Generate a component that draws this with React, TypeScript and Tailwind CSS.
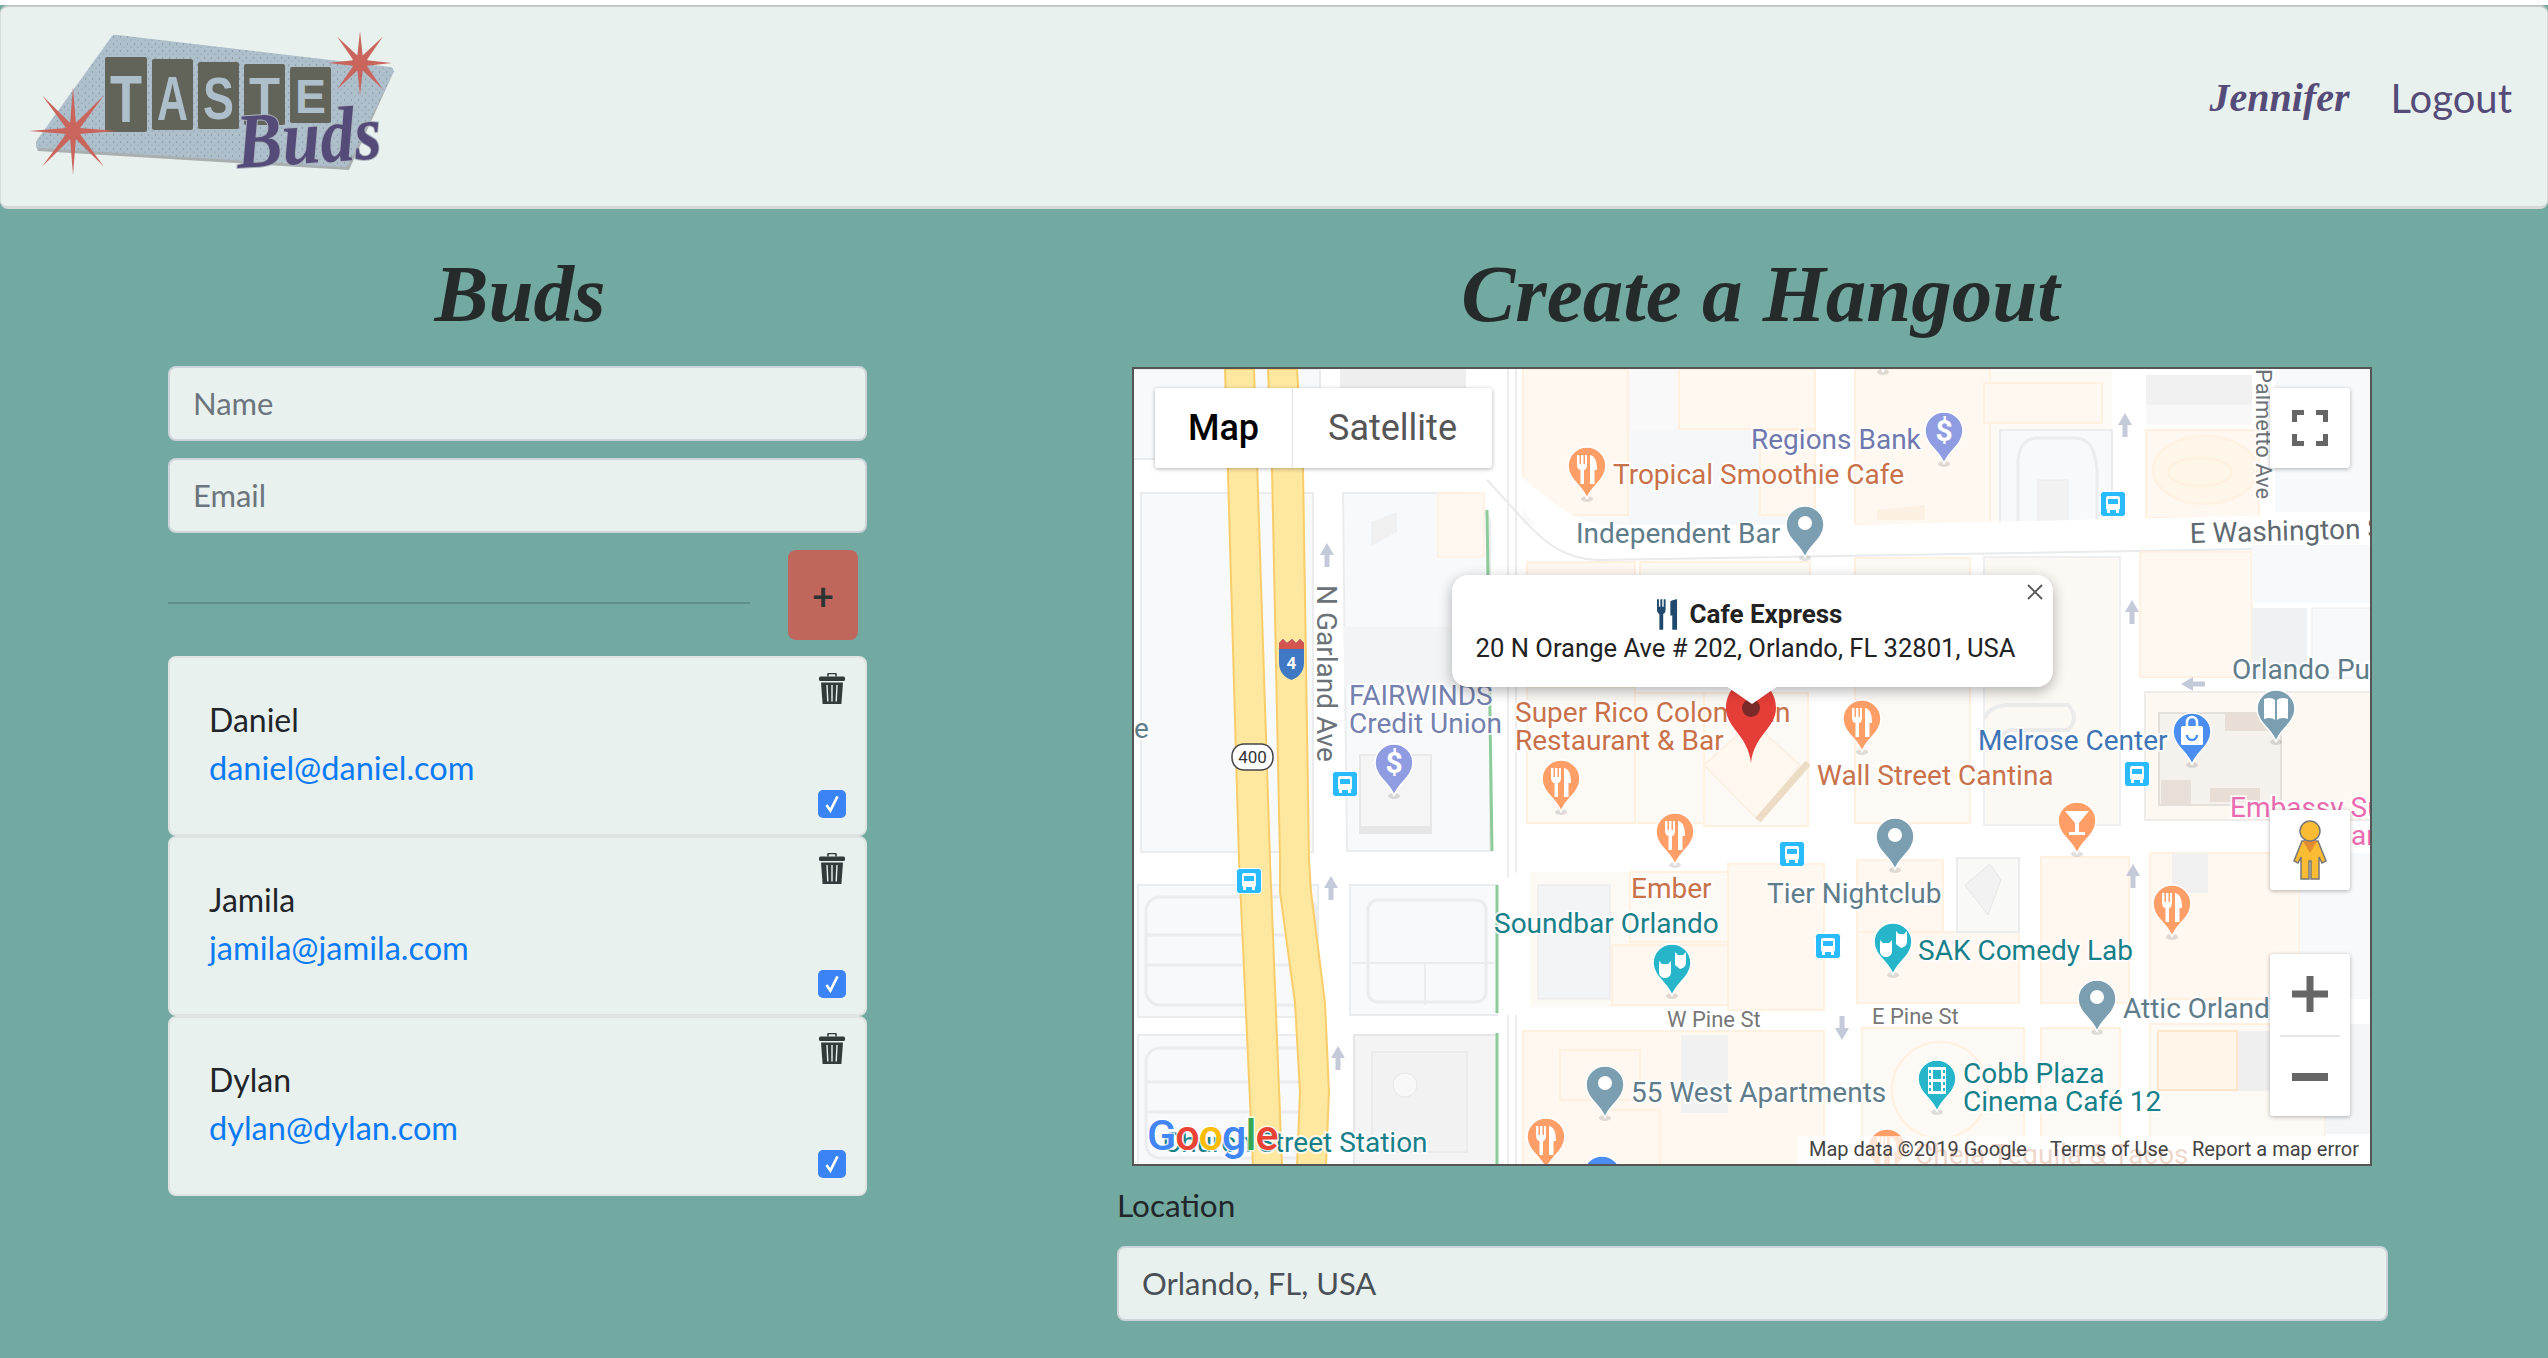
type PinKind = "fork" | "dot" | "dollar" | "bag" | "book" | "mask" | "film" | "cocktail";

const ORANGE = "#ff9e67";
const SLATE = "#7b9eb0";
const PURPLE = "#909ce1";
const TEAL = "#26b5c9";
const BLUE = "#4c8ef0";

function Pin({ x, y, color, kind }: { x: number; y: number; color: string; kind: PinKind }) {
  return (
    <g transform={`translate(${x} ${y})`}>
      <ellipse cx="0" cy="52" rx="6" ry="3" fill="#000" opacity="0.12" />
      <path
        d="M0 52 C-3 40 -19 33 -19 19 A19 19 0 1 1 19 19 C19 33 3 40 0 52 Z"
        fill={color}
        stroke="#fff"
        strokeWidth="1.5"
      />
      {kind === "dot" && <circle cx="0" cy="17" r="7" fill="#fff" />}
      {kind === "fork" && (
        <g fill="#fff">
          <path d="M-10 8 V18 C-10 21 -8 23 -6.5 23 V37 H-3 V23 C-1.5 23 0 21 0 18 V8 H-2 V17 H-3.5 V8 H-6 V17 H-7.5 V8 Z" />
          <path d="M3 8 C8 9 10 14 10 23 H7.5 V37 H3 Z" />
        </g>
      )}
      {kind === "dollar" && (
        <text x="0" y="29" textAnchor="middle" fontSize="30" fontWeight="700" fill="#fff">
          $
        </text>
      )}
      {kind === "bag" && (
        <g>
          <rect x="-11" y="13" width="22" height="19" rx="1.5" fill="#fff" />
          <path d="M-5 13 V9 A5 5 0 0 1 5 9 V13" fill="none" stroke="#fff" strokeWidth="2.5" />
          <path d="M-5 22 A5 5 0 0 0 5 22" fill="none" stroke={color} strokeWidth="2.5" />
        </g>
      )}
      {kind === "book" && (
        <path d="M-12 9 C-7 7 -3 8 -1 10 V30 C-3 28 -7 27 -12 29 Z M12 9 C7 7 3 8 1 10 V30 C3 28 7 27 12 29 Z" fill="#fff" />
      )}
      {kind === "mask" && (
        <g fill="#fff">
          <path d="M-13 17 L-10 20 H-4 L-1 17 V28 C-1 32 -4 34 -7 34 C-10 34 -13 32 -13 28 Z" />
          <path d="M3 8 L6 11 H11 L14 8 V18 C14 22 12 24 8 25 L3 21 Z" />
        </g>
      )}
      {kind === "film" && (
        <g>
          <rect x="-9" y="7" width="18" height="27" fill="#fff" />
          <rect x="-4" y="10" width="8" height="9" fill={color} />
          <rect x="-4" y="22" width="8" height="9" fill={color} />
          <path d="M-7 10 V31 M7 10 V31" stroke={color} strokeWidth="2" strokeDasharray="3 3" />
        </g>
      )}
      {kind === "cocktail" && (
        <path d="M-12 9 H12 L2 21 V30 H8 V33 H-8 V30 H-2 V21 Z" fill="#fff" />
      )}
    </g>
  );
}

function Bus({ x, y }: { x: number; y: number }) {
  return (
    <g transform={`translate(${x} ${y})`}>
      <rect x="-12.5" y="-0.5" width="25" height="25" rx="3" fill="#2abaff" stroke="#fff" strokeWidth="1" />
      <rect x="-7" y="4" width="14" height="14" rx="2" fill="#fff" />
      <rect x="-5" y="7" width="10" height="5" fill="#2abaff" />
      <rect x="-6" y="18" width="3" height="3" fill="#fff" />
      <rect x="3" y="18" width="3" height="3" fill="#fff" />
    </g>
  );
}

function Arrow({ x, y, rot = 0 }: { x: number; y: number; rot?: number }) {
  return (
    <path
      transform={`translate(${x} ${y}) rotate(${rot})`}
      d="M0 -12 L7 0 H2.5 V12 H-2.5 V0 H-7 Z"
      fill="#c5cadb"
    />
  );
}

function Label({
  x,
  y,
  color,
  size = 28,
  rot,
  children,
}: {
  x: number;
  y: number;
  color: string;
  size?: number;
  rot?: number;
  children: string;
}) {
  return (
    <text
      x={x}
      y={y}
      fill={color}
      fontSize={size}
      stroke="#fff"
      strokeWidth="4"
      strokeOpacity="0.75"
      paintOrder="stroke"
      transform={rot !== undefined ? `rotate(${rot} ${x} ${y})` : undefined}
    >
      {children}
    </text>
  );
}

const B = "#fff8f1";
const BS = "#fff0e0";
const P = "#fdfaf6";
const G = "#f8f9fb";
const GS = "#ebecee";

function R({ x, y, w, h, f = B, s = BS }: { x: number; y: number; w: number; h: number; f?: string; s?: string }) {
  return <rect x={x} y={y} width={w} height={h} fill={f} stroke={s} strokeWidth="2" />;
}

function MapDrawing() {
  const rust = "#c8714a";
  const slate = "#5f7c8a";
  const teal = "#178089";
  const bank = "#6f79ad";
  return (
    <svg viewBox="1134 369 1236 795" className="block h-full w-full font-[Roboto]">
      <rect x="1134" y="369" width="1236" height="795" fill="#ffffff" />

      {/* west of the highway */}
      <R x={1120} y={369} w={200} h={90} f={G} s={GS} />
      <R x={1141} y={493} w={172} h={359} f={G} s={GS} />
      <R x={1138} y={885} w={180} h={132} f={G} s={GS} />
      <R x={1138} y={1035} w={180} h={140} f={G} s={GS} />
      <rect x="1146" y="897" width="170" height="108" rx="14" fill="none" stroke={GS} strokeWidth="3" />
      <path d="M1146 935 H1315 M1146 965 H1315" stroke={GS} strokeWidth="3" />
      <rect x="1146" y="1048" width="170" height="110" rx="14" fill="none" stroke={GS} strokeWidth="3" />
      <path d="M1146 1082 H1315 M1146 1112 H1315" stroke={GS} strokeWidth="3" />

      {/* garland blocks */}
      <rect x="1340" y="367" width="126" height="22" fill="#eeeeee" />
      <path d="M1343 493 H1460 Q1475 493 1490 520 V851 H1347 Z" fill={G} stroke={GS} strokeWidth="2" />
      <rect x="1438" y="493" width="46" height="64" fill={B} stroke={BS} strokeWidth="1.5" />
      <path d="M1371 522 L1397 512 V532 L1371 546 Z" fill="#f0f0f0" />
      <rect x="1344" y="627" width="107" height="60" fill="#f3f4f5" />
      <rect x="1360" y="755" width="71" height="78" fill="#f5f5f5" stroke="#e8e8e8" strokeWidth="2" />
      <rect x="1360" y="826" width="71" height="7" fill="#e6e6e6" />
      <R x={1350} y={885} w={147} h={130} f={G} s={GS} />
      <rect x="1368" y="900" width="118" height="102" rx="10" fill="none" stroke={GS} strokeWidth="3" />
      <path d="M1352 963 H1495 M1425 962 V1005" stroke={GS} strokeWidth="2" />
      <R x={1354} y={1035} w={143} h={135} f="#f4f4f4" s="#e6e6e6" />
      <rect x="1372" y="1052" width="95" height="100" fill="#f2f2f2" stroke="#e8e8e8" strokeWidth="1.5" />
      <circle cx="1405" cy="1085" r="12" fill="#f8f8f8" stroke="#e6e6e6" />

      {/* top blocks */}
      <rect x="1523" y="369" width="292" height="156" fill="#f9f9f9" />
      <path d="M1523 369 H1628 V515 H1555 L1540 500 L1530 495 L1523 490 Z" fill={B} stroke={BS} strokeWidth="2" />
      <rect x="1630" y="430" width="180" height="95" fill="#f6f7f9" />
      <R x={1679} y={369} w={136} h={60} />
      <R x={1760} y={430} w={55} h={85} />
      <rect x="1855" y="369" width="257" height="156" fill={P} />
      <path d="M1855 369 H1990 V525 H1855 Z" fill={B} stroke={BS} strokeWidth="2" />
      <path d="M1877 510 L1877 520 H1925 V505 Z" fill="#fcf0e2" />
      <R x={1984} y={383} w={118} h={40} />
      <R x={2000} y={430} w={112} h={95} f={G} s={GS} />
      <path d="M2018 525 V460 Q2020 440 2035 438 H2075 Q2095 438 2097 470 V525" fill="none" stroke={GS} strokeWidth="3" />
      <rect x="2038" y="480" width="30" height="44" fill="#f2f2f2" stroke={GS} />
      <rect x="2146" y="375" width="106" height="30" fill="#f1f1f1" />
      <rect x="2146" y="405" width="106" height="20" fill="#f8f8f8" />
      <R x={2146} y={430} w={113} h={88} />
      <ellipse cx="2205" cy="470" rx="52" ry="34" fill="#fff6ea" stroke={BS} strokeWidth="2" />
      <ellipse cx="2200" cy="472" rx="32" ry="14" fill="none" stroke={BS} strokeWidth="2" />
      <rect x="2275" y="369" width="100" height="143" fill={G} />

      {/* the road east-west: E Washington */}
      <path d="M1490 468 C1530 515 1550 558 1600 558 L2372 545 V513 L1855 525 L1610 525 C1570 525 1540 490 1500 460 Z" fill="#ffffff" />
      <path d="M1487 480 C1530 525 1550 560 1600 560 L2372 547" fill="none" stroke="#e9eaec" strokeWidth="2" />

      {/* middle band */}
      <R x={1527} y={562} w={108} h={120} />
      <R x={1527} y={687} w={108} h={136} f={P} />
      <R x={1635} y={693} w={69} h={130} f={P} s={BS} />
      <R x={1640} y={562} w={170} h={120} f={P} />
      <R x={1704} y={693} w={104} h={133} f={P} />
      <path d="M1704 765 L1752 722 L1800 765 L1758 820 Z" fill="#fff8ef" stroke="#fbf1e4" strokeWidth="2" />
      <path d="M1808 763 L1758 820" stroke="#ecdcc6" strokeWidth="7" />
      <R x={1855} y={558} w={115} h={265} f={P} />
      <R x={1984} y={557} w={136} h={268} f="#fcf9f4" s="#eeeff0" />
      <path d="M1985 718 Q1990 705 2010 705 H2068 Q2080 718 2068 730 H2010 Q2000 735 1990 745" fill="none" stroke="#ebebec" strokeWidth="4" />
      <R x={2140} y={552} w={112} h={125} />
      <rect x="2252" y="545" width="120" height="58" fill={G} />
      <rect x="2252" y="608" width="55" height="70" fill="#f0f1f2" />
      <rect x="2312" y="608" width="60" height="70" fill={G} stroke={GS} />
      <R x={2145} y={692} w={230} h={128} f="#fdf8f2" s="#eeece8" />
      <rect x="2159" y="713" width="122" height="92" fill="#f5f2ee" stroke="#ddd8d2" strokeWidth="1.5" />
      <rect x="2225" y="713" width="55" height="18" fill="#e8ded6" />
      <rect x="2161" y="780" width="30" height="24" fill="#e8e0d8" />
      <rect x="2210" y="788" width="50" height="14" fill="#e8ded6" />

      {/* rail line */}
      <path d="M1487 510 L1492 851 M1497 885 V1013 M1497 1033 V1166" stroke="#8ecb9a" strokeWidth="3" fill="none" />
      <path d="M1508 369 V1166 M1516 369 V1166" stroke="#e7e8ea" strokeWidth="1.5" />

      {/* lower blocks */}
      <path d="M1500 885 Q1515 869 1530 869 H1830 V1010 L1500 1015 Z" fill="#ffffff" />
      <rect x="1530" y="872" width="294" height="135" fill={P} />
      <rect x="1538" y="885" width="72" height="114" fill="#f3f4f5" stroke="#e8e8e8" />
      <R x={1612} y={945} w={116} h={60} />
      <R x={1728} y={864} w={96} h={146} />
      <R x={1630} y={872} w={98} h={70} f={P} />
      <R x={1523} y={1031} w={301} h={140} />
      <rect x="1681" y="1035" width="47" height="78" fill="#f1f1f2" />
      <path d="M1560 1050 H1640 V1100 H1560 Z M1600 1110 H1660 V1165" fill="none" stroke={BS} strokeWidth="2" />
      <R x={1857} y={860} w={86} h={72} />
      <R x={1857} y={932} w={162} h={71} />
      <R x={1957} y={858} w={62} h={74} f="#f9f9f8" s={GS} />
      <path d="M1990 864 L2001 880 L1988 915 L1965 885 Z" fill="#f2f2f2" stroke="#e6e6e6" />
      <R x={2041} y={857} w={88} h={146} />
      <R x={2150} y={853} w={150} h={146} />
      <rect x="2300" y="853" width="72" height="146" fill={G} />
      <rect x="2172" y="853" width="36" height="40" fill="#f0f0f0" />
      <R x={1862} y={1028} w={162} h={140} f={P} />
      <circle cx="1940" cy="1090" r="48" fill="none" stroke={BS} strokeWidth="2" />
      <R x={2041} y={1028} w={79} h={140} f={P} />
      <R x={2150} y={1024} w={175} h={145} f={P} />
      <R x={2158} y={1031} w={79} h={59} f="#fff5e8" s="#ffe6ca" />
      <rect x="2238" y="1031" width="34" height="60" fill="#efefef" />
      <rect x="2325" y="1024" width="47" height="110" fill="#f4f5f6" />

      {/* highway */}
      <path
        d="M1225 369 L1254 369 L1270 860 L1282 1166 L1253 1166 L1239 860 Z"
        fill="#fee79f"
        stroke="#f8cd6a"
        strokeWidth="2"
      />
      <path
        d="M1268 369 L1297 369 L1303 468 L1309 860 L1311 892 L1325 1003 L1329 1092 L1326 1166 L1297 1166 L1300 1092 L1295 1003 L1280 892 L1280 860 L1272 468 Z"
        fill="#fee79f"
        stroke="#f8cd6a"
        strokeWidth="2"
      />

      {/* interstate shield & state road */}
      <path d="M1279 643 L1283 639 L1287 643 L1292 639 L1296 643 L1300 639 L1304 643 V663 C1304 673 1297 678 1291.5 680 C1286 678 1279 673 1279 663 Z" fill="#3f78c4" />
      <path d="M1279 643 L1283 639 L1287 643 L1292 639 L1296 643 L1300 639 L1304 643 V649 H1279 Z" fill="#d3554e" />
      <text x="1291.5" y="669" textAnchor="middle" fontSize="17" fontWeight="700" fill="#fff">4</text>
      <rect x="1232" y="744" width="41" height="26" rx="12" fill="#fff" stroke="#444" strokeWidth="1.5" />
      <text x="1252.5" y="763" textAnchor="middle" fontSize="17" fill="#333">400</text>

      {/* arrows */}
      <Arrow x={1327} y={555} />
      <Arrow x={1331} y={888} />
      <Arrow x={1338} y={1058} />
      <Arrow x={2125} y={425} />
      <Arrow x={2132} y={612} />
      <Arrow x={2193} y={684} rot={-90} />
      <Arrow x={2133} y={876} />
      <Arrow x={1842} y={1028} rot={180} />

      {/* bus stops */}
      <Bus x={1345} y={772} />
      <Bus x={1249} y={869} />
      <Bus x={1792} y={842} />
      <Bus x={2113} y={492} />
      <Bus x={2137} y={762} />
      <Bus x={1828} y={934} />

      {/* labels */}
      <Label x={1134} y={738} color={slate}>e</Label>
      <Label x={1317} y={585} color="#6b7278" rot={90}>N Garland Ave</Label>
      <Label x={2256} y={369} color="#6b7278" size={22} rot={90}>Palmetto Ave</Label>
      <Label x={1751} y={449} color={bank}>Regions Bank</Label>
      <Label x={1613} y={484} color={rust}>Tropical Smoothie Cafe</Label>
      <Label x={1576} y={543} color={slate}>Independent Bar</Label>
      <Label x={2190} y={543} color="#5f6a70" rot={-1.5}>E Washington St</Label>
      <Label x={1349} y={705} color="#7480ad">FAIRWINDS</Label>
      <Label x={1349} y={733} color="#7480ad">Credit Union</Label>
      <Label x={1515} y={722} color={rust}>Super Rico Colombian</Label>
      <Label x={1515} y={750} color={rust}>Restaurant &amp; Bar</Label>
      <Label x={1817} y={785} color={rust}>Wall Street Cantina</Label>
      <Label x={1978} y={750} color="#3f74b5">Melrose Center</Label>
      <Label x={2232} y={679} color={slate}>Orlando Public Library</Label>
      <Label x={2230} y={817} color="#ea6bb0">Embassy Suites</Label>
      <Label x={2351} y={845} color="#ea6bb0">an</Label>
      <Label x={1631} y={898} color={rust}>Ember</Label>
      <Label x={1767} y={903} color={slate}>Tier Nightclub</Label>
      <Label x={1494} y={933} color={teal}>Soundbar Orlando</Label>
      <Label x={1918} y={960} color={teal}>SAK Comedy Lab</Label>
      <Label x={1667} y={1027} color="#777" size={22}>W Pine St</Label>
      <Label x={1872} y={1024} color="#777" size={22}>E Pine St</Label>
      <Label x={2123} y={1018} color={slate}>Attic Orlando</Label>
      <Label x={1631} y={1102} color={slate}>55 West Apartments</Label>
      <Label x={1963} y={1083} color={teal}>Cobb Plaza</Label>
      <Label x={1963} y={1111} color={teal}>Cinema Café 12</Label>
      <Label x={1163} y={1152} color={teal}>Church Street Station</Label>
      <Label x={1915} y={1164} color="#c8714a">Chela Tequila &amp; Tacos</Label>

      {/* pins */}
      <Pin x={1883} y={320} color={PURPLE} kind="dollar" />
      <Pin x={1587} y={447} color={ORANGE} kind="fork" />
      <Pin x={1944} y={412} color={PURPLE} kind="dollar" />
      <Pin x={1805} y={506} color={SLATE} kind="dot" />
      <Pin x={1394} y={744} color={PURPLE} kind="dollar" />
      <Pin x={1561} y={760} color={ORANGE} kind="fork" />
      <Pin x={1675} y={813} color={ORANGE} kind="fork" />
      <Pin x={1862} y={700} color={ORANGE} kind="fork" />
      <Pin x={2192} y={713} color={BLUE} kind="bag" />
      <Pin x={2276} y={690} color={SLATE} kind="book" />
      <Pin x={2077} y={802} color={ORANGE} kind="cocktail" />
      <Pin x={1895} y={818} color={SLATE} kind="dot" />
      <Pin x={2172} y={885} color={ORANGE} kind="fork" />
      <Pin x={2097} y={980} color={SLATE} kind="dot" />
      <Pin x={1893} y={923} color={TEAL} kind="mask" />
      <Pin x={1672} y={944} color={TEAL} kind="mask" />
      <Pin x={1937} y={1060} color={TEAL} kind="film" />
      <Pin x={1605} y={1066} color={SLATE} kind="dot" />
      <Pin x={1546} y={1118} color={ORANGE} kind="fork" />
      <Pin x={1602} y={1156} color={BLUE} kind="dot" />
      <Pin x={1887} y={1129} color={ORANGE} kind="fork" />

      {/* google logo */}
      <text x="1147" y="1150" fontSize="43" fontWeight="500" stroke="#fff" strokeWidth="3" strokeOpacity="0.8" paintOrder="stroke" letterSpacing="-1">
        <tspan fill="#4285f4">G</tspan>
        <tspan fill="#ea4335">o</tspan>
        <tspan fill="#fbbc05">o</tspan>
        <tspan fill="#4285f4">g</tspan>
        <tspan fill="#34a853">l</tspan>
        <tspan fill="#ea4335">e</tspan>
      </text>

      {/* attribution */}
      <rect x="1797" y="1136" width="575" height="30" fill="#ffffff" opacity="0.72" />
      <text x="1809" y="1156" fontSize="20" fill="#444">Map data ©2019 Google</text>
      <text x="2050" y="1156" fontSize="20" fill="#444">Terms of Use</text>
      <text x="2192" y="1156" fontSize="20" fill="#444">Report a map error</text>

      {/* selected marker */}
      <path d="M1751 763 C1748 735 1726 728 1726 708 C1726 692 1737 680 1751 680 C1765 680 1776 692 1776 708 C1776 728 1754 735 1751 763 Z" fill="#e53e38" />
      <circle cx="1751" cy="708" r="9" fill="#7a2a28" />
    </svg>
  );
}

function Star({ cx, cy, v, h, d }: { cx: number; cy: number; v: number; h: number; d: number }) {
  const w = 3.5;
  return (
    <g fill="#c9655c">
      <path d={`M${cx} ${cy - v} L${cx + w} ${cy} L${cx} ${cy + v} L${cx - w} ${cy} Z`} />
      <path d={`M${cx - h} ${cy} L${cx} ${cy - w} L${cx + h} ${cy} L${cx} ${cy + w} Z`} />
      <path d={`M${cx - d} ${cy - d * 1.15} L${cx + w} ${cy - w / 2} L${cx + d} ${cy + d * 1.15} L${cx - w} ${cy + w / 2} Z`} />
      <path d={`M${cx + d} ${cy - d * 1.15} L${cx + w} ${cy + w / 2} L${cx - d} ${cy + d * 1.15} L${cx - w} ${cy - w / 2} Z`} />
      <circle cx={cx} cy={cy} r="8" />
    </g>
  );
}

function Logo() {
  const tiles = [
    { x: 105, y: 57, w: 42, h: 75, l: "T" },
    { x: 152, y: 59, w: 41, h: 71, l: "A" },
    { x: 198, y: 62, w: 41, h: 67, l: "S" },
    { x: 244, y: 64, w: 41, h: 61, l: "T" },
    { x: 290, y: 67, w: 41, h: 56, l: "E" },
  ];
  return (
    <svg viewBox="1 7 420 190" className="block h-[190px] w-[420px] self-start">
      <defs>
        <pattern id="speck" width="7" height="7" patternUnits="userSpaceOnUse">
          <rect width="7" height="7" fill="#aebfcc" />
          <circle cx="1.5" cy="2" r="0.7" fill="#7f8f9c" />
          <circle cx="5" cy="5.2" r="0.6" fill="#8c9ba6" />
          <circle cx="5.5" cy="1" r="0.4" fill="#c8d4dd" />
        </pattern>
      </defs>
      <path d="M114 38 L394 71 L349 170 L38 151 L36 146 Z" fill="#a9aeae" />
      <path d="M112 36 Q114 34 118 35 L390 67 Q395 68 393 73 L348 165 Q346 168 342 167 L40 148 Q34 147 37 140 Z" fill="url(#speck)" />
      {tiles.map((t, i) => (
        <g key={i}>
          <rect x={t.x} y={t.y} width={t.w} height={t.h} rx="2" fill="#62645a" />
          <text
            x={t.x + t.w / 2}
            y={t.y + t.h - 10}
            textAnchor="middle"
            fontFamily="'Liberation Sans', sans-serif"
            fontWeight="700"
            fontSize={t.h - 8}
            fill="#aebfcc"
            textLength={t.w - 10}
            lengthAdjust="spacingAndGlyphs"
          >
            {t.l}
          </text>
        </g>
      ))}
      <Star cx={360} cy={63} v={32} h={32} d={23} />
      <Star cx={73} cy={131} v={44} h={44} d={31} />
      <text
        x="238"
        y="168"
        fontFamily="'Liberation Serif', serif"
        fontStyle="italic"
        fontWeight="700"
        fontSize="78"
        fill="#544b78"
        stroke="#a9b3bb"
        strokeWidth="2"
        paintOrder="stroke"
        textLength="145"
        lengthAdjust="spacingAndGlyphs"
        transform="rotate(-4 238 168)"
      >
        Buds
      </text>
    </svg>
  );
}

function Trash() {
  return (
    <svg viewBox="0 0 26 31" className="h-[31px] w-[26px]">
      <path d="M9 3.5 V1.5 Q9 0.5 10 0.5 H16 Q17 0.5 17 1.5 V3.5" fill="none" stroke="#333a3a" strokeWidth="1.6" />
      <rect x="0" y="3.5" width="26" height="4.5" rx="1.5" fill="#333a3a" />
      <path d="M2 9.5 H24 L22.4 31 H3.6 Z" fill="#333a3a" />
      <path d="M8 12 L8.8 28.5 M13 12 V28.5 M18 12 L17.2 28.5" stroke="#e9f1ee" strokeWidth="1.4" />
    </svg>
  );
}

function Bud({ name, email }: { name: string; email: string }) {
  return (
    <div className="flex h-[180px] justify-between rounded-lg border-2 border-[#dfe3e1] bg-[#e9f1ee]">
      <div className="pl-[39px] pt-[38px]">
        <div className="text-[32px] leading-[48px] text-[#212529]">{name}</div>
        <div className="text-[32.5px] leading-[48px] text-[#0b7bf5]">{email}</div>
      </div>
      <div className="flex flex-col items-center justify-between pb-[16px] pr-[19px] pt-[15px]">
        <Trash />
        <div className="flex h-[28px] w-[28px] items-center justify-center rounded-[5px] bg-[#3b84f5]">
          <svg viewBox="0 0 20 20" className="h-[22px] w-[22px]">
            <path d="M5 11 L8.5 16 L15 3" fill="none" stroke="#fff" strokeWidth="2.4" />
          </svg>
        </div>
      </div>
    </div>
  );
}

export default function App() {
  const inputCls =
    "block h-[75px] w-full rounded-lg border-2 border-[#ced4da] bg-[#e9f1ee] px-[23px] pb-[2px] text-[31px] text-[#495057] placeholder:text-[#6c757d] outline-none";
  const headCls =
    "flex h-[157px] items-center justify-center pt-[15px] font-['Liberation_Serif'] text-[81px] font-bold italic text-[#252b2b]";
  return (
    <div className="h-[1358px] w-full overflow-hidden bg-[#72a9a0] font-[Lato] text-[#212529]">
      <div className="h-[5px] bg-white" />
      <nav className="flex h-[204px] items-center justify-between rounded-lg border-t-2 border-b-[3px] border-x border-t-[#c4c8c6] border-b-[#d4d8d6] border-x-[#d8dcda] bg-[#e9f1ee] pr-[35px]">
        <Logo />
        <div className="flex items-center gap-[41px] pb-[18px] text-[#544b78]">
          <span className="font-['Liberation_Serif'] text-[40px] font-bold italic">Jennifer</span>
          <span className="text-[40px]">Logout</span>
        </div>
      </nav>
      <main className="flex pl-[168px]">
        <section className="w-[699px]">
          <h1 className={`${headCls} pl-[5px]`}>Buds</h1>
          <div className="flex flex-col gap-[17px]">
            <input className={inputCls} placeholder="Name" />
            <input className={inputCls} placeholder="Email" />
          </div>
          <div className="mt-[17px] flex">
            <div className="mt-[52px] h-[2px] w-[582px] bg-[#5f9088]" />
            <button className="ml-[38px] flex h-[90px] w-[70px] items-center justify-center rounded-lg bg-[#c1665c] text-[38px] font-bold text-[#2d3333]">
              +
            </button>
          </div>
          <div className="mt-[16px]">
            <Bud name="Daniel" email="daniel@daniel.com" />
            <Bud name="Jamila" email="jamila@jamila.com" />
            <Bud name="Dylan" email="dylan@dylan.com" />
          </div>
        </section>
        <section className="ml-[250px] w-[1271px]">
          <h1 className={`${headCls} pl-[16px]`}>Create a Hangout</h1>
          <div className="relative ml-[15px] mt-px h-[799px] w-[1240px] overflow-hidden border-2 border-[#555]">
            <MapDrawing />
            <div className="absolute left-[21px] top-[19px] flex h-[80px] rounded-[3px] bg-white font-[Roboto] text-[36px] shadow-[0_1px_4px_rgba(0,0,0,0.3)]">
              <div className="flex w-[138px] items-center justify-center border-r border-[#e6e6e6] font-medium text-black">Map</div>
              <div className="flex w-[199px] items-center justify-center text-[#565656]">Satellite</div>
            </div>
            <div className="absolute left-[1136px] top-[19px] flex h-[80px] w-[80px] items-center justify-center rounded-[3px] bg-white shadow-[0_1px_4px_rgba(0,0,0,0.3)]">
              <svg viewBox="0 0 36 36" className="h-[36px] w-[36px]">
                <path d="M2.5 12 V2.5 H12 M24 2.5 H33.5 V12 M33.5 24 V33.5 H24 M12 33.5 H2.5 V24" fill="none" stroke="#666" strokeWidth="5" />
              </svg>
            </div>
            <div className="absolute left-[1136px] top-[441px] flex h-[80px] w-[80px] items-center justify-center rounded-[3px] bg-white shadow-[0_1px_4px_rgba(0,0,0,0.3)]">
              <svg viewBox="0 0 40 62" className="h-[62px] w-[40px]">
                <path d="M12 22 L4 42 L8 44 L11 38 V60 H19 V42 H21 V60 H29 V38 L32 44 L36 42 L28 22 Z" fill="#fbbc33" stroke="#777" strokeWidth="1.5" />
                <path d="M13 22 H27 L20 34 Z" fill="#e08a32" />
                <circle cx="20" cy="12" r="10" fill="#fbbc33" stroke="#777" strokeWidth="1.5" />
              </svg>
            </div>
            <div className="absolute left-[1136px] top-[585px] flex h-[162px] w-[80px] flex-col items-center rounded-[3px] bg-white shadow-[0_1px_4px_rgba(0,0,0,0.3)]">
              <svg viewBox="0 0 36 36" className="mt-[22px] h-[36px] w-[36px]">
                <path d="M14.5 0 H21.5 V14.5 H36 V21.5 H21.5 V36 H14.5 V21.5 H0 V14.5 H14.5 Z" fill="#666" />
              </svg>
              <div className="mt-[23px] h-[2px] w-[60px] bg-[#e6e6e6]" />
              <div className="mt-[36px] h-[8px] w-[36px] bg-[#666]" />
            </div>
            <div className="absolute left-[318px] top-[206px] h-[112px] w-[601px] rounded-2xl bg-white font-[Roboto] shadow-[0_4px_14px_rgba(0,0,0,0.3)]">
              <div className="mt-[23px] flex items-center justify-center gap-[12px] pr-[6px] text-[26px] font-bold leading-[32px] text-[#222]">
                <svg viewBox="0 0 22 32" className="h-[31px] w-[21px]">
                  <path d="M0 0 H2 V8 H3.5 V0 H5.5 V8 H7 V0 H9 V11 C9 14 7.5 15 6.5 15.5 V32 H2.5 V15.5 C1.5 15 0 14 0 11 Z M14 2 C19 0 21 0 21 0 V32 H16 V17 H14 Z" fill="#1f4a6e" />
                </svg>
                <span>Cafe Express</span>
              </div>
              <div className="pr-[14px] text-center text-[25.6px] leading-[36px] text-[#222]">20 N Orange Ave # 202, Orlando, FL 32801, USA</div>
              <svg viewBox="0 0 16 16" className="absolute right-[10px] top-[9px] h-[16px] w-[16px]">
                <path d="M1 1 L15 15 M15 1 L1 15" stroke="#555" strokeWidth="1.8" />
              </svg>
              <div className="absolute left-[274px] top-[111px] h-0 w-0 border-x-[26px] border-t-[18px] border-x-transparent border-t-white" />
            </div>
          </div>
          <div className="mt-[19px] text-[31.5px] leading-[40px] text-[#212529]">Location</div>
          <input className={`${inputCls} mt-[21px]`} defaultValue="Orlando, FL, USA" />
        </section>
      </main>
    </div>
  );
}
